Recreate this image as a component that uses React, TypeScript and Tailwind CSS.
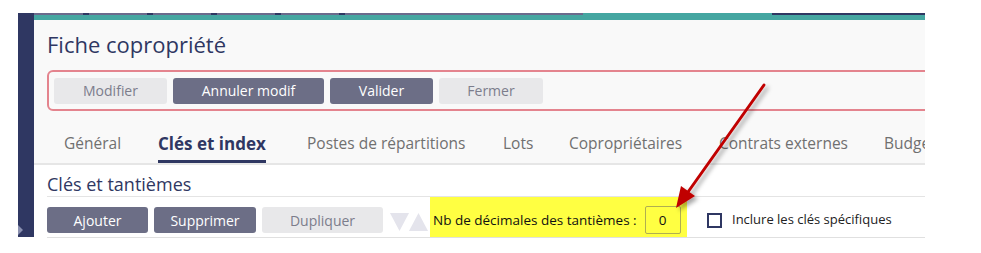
import React from 'react';

const topButtons = [
  { label: 'Modifier', w: 'w-[113px]', active: false },
  { label: 'Annuler modif', w: 'w-[151px]', active: true },
  { label: 'Valider', w: 'w-[103px]', active: true },
  { label: 'Fermer', w: 'w-[104px]', active: false },
];

const tabs = [
  { label: 'Général', w: 'w-[94px]' },
  { label: 'Clés et index', w: 'w-[149px]', active: true },
  { label: 'Postes de répartitions', w: 'w-[196px]' },
  { label: 'Lots', w: 'w-[66px]' },
  { label: 'Copropriétaires', w: 'w-[150px]' },
  { label: 'Contrats externes', w: 'w-[165px]' },
  { label: 'Budget', w: 'w-[80px]' },
];

const Btn: React.FC<{ label: string; w: string; active?: boolean }> = ({ label, w, active }) => (
  <div
    className={`${w} h-[26px] shrink-0 rounded-[3px] flex items-center justify-center text-[14px] ${
      active ? 'bg-[#6c6e86] text-white' : 'bg-[#e8e8ea] text-[#7c7d8c]'
    }`}
  >
    {label}
  </div>
);

export default function App() {
  return (
    <div
      className="relative w-[981px] h-[253px] bg-white overflow-hidden"
      style={{ fontFamily: '"Open Sans", "Noto Sans", sans-serif' }}
    >
      <div className="pt-[13px] flex">
        <div className="w-[18px] shrink-0" />
        {/* Sidebar */}
        <div className="w-[16px] h-[224px] shrink-0 bg-[#2f3762] flex flex-col items-start justify-end pb-[2px]">
          <div className="w-0 h-0 border-y-[5px] border-y-transparent border-l-[5px] border-l-[#8a90b0]" />
        </div>

        {/* Main */}
        <div className="w-[891px] shrink-0 overflow-hidden flex flex-col">
          {/* Top bar */}
          <div className="h-[2px] bg-[#6b6a8c] flex">
            <div className="flex gap-[58px] pl-[49px] w-[549px]">
              {[0, 1, 2, 3, 4].map((i) => (
                <div key={i} className="w-[6px] h-[2px] bg-[#2f3762]" />
              ))}
            </div>
            <div className="w-[189px] h-[2px] bg-[#45a6a1]" />
            <div className="flex-1 h-[2px] bg-[#2f3762]" />
          </div>
          <div className="h-[5px] bg-[#45a6a1]" />

          {/* Header panel */}
          <div className="bg-[#f9f9f9] h-[143px] flex flex-col">
            <div className="pl-[13px] pt-[9px] h-[50px] text-[22px] text-[#2f3762] leading-[30px]">
              Fiche copropriété
            </div>
            <div className="ml-[13px] w-[900px] h-[41px] border-2 border-[#e4848e] rounded-[6px] flex items-center gap-[6px] pl-[5px]">
              {topButtons.map((b) => (
                <Btn key={b.label} {...b} />
              ))}
            </div>
            <div className="flex pl-[13px] mt-[16px] h-[36px]">
              {tabs.map((t) => (
                <div key={t.label} className={`${t.w} shrink-0 flex items-start pl-[17px]`}>
                  <div className="inline-flex flex-col">
                    <span
                      className={`leading-[33px] whitespace-nowrap ${
                        t.active ? 'text-[17px] font-bold text-[#2f3762]' : 'text-[15.5px] text-[#707070]'
                      }`}
                    >
                      {t.label}
                    </span>
                    {t.active && <div className="w-full h-[3px] bg-[#2f3762]" />}
                  </div>
                </div>
              ))}
            </div>
          </div>
          <div className="h-[2px] bg-[#e6e6e6]" />

          {/* Section */}
          <div className="bg-white flex flex-col pl-[13px]">
            <div className="h-[31px] pt-[7px] text-[18px] leading-[24px] text-[#2f3762]">Clés et tantièmes</div>
            <div className="h-[1px] bg-[#e4e4e4]" />
            <div className="h-[40px] flex items-center">
              <div className="flex gap-[6px] items-center mt-[6px]">
                <Btn label="Ajouter" w="w-[101px]" active />
                <Btn label="Supprimer" w="w-[102px]" active />
                <Btn label="Dupliquer" w="w-[121px]" />
              </div>
              <div className="flex items-center ml-[7px] mt-[10px]">
                <svg width="39" height="18" viewBox="0 0 39 18">
                  <polygon points="0,0 19,0 9.5,18" fill="#e4e4ec" />
                  <polygon points="19,18 38,18 28.5,0" fill="#e4e4ec" />
                </svg>
              </div>
              <div className="ml-[1px] w-[257px] h-[40px] bg-[#ffff42] flex items-center pl-[3px] pt-[6px]">
                <span className="text-[13.5px] text-[#111]">Nb de décimales des tantièmes :</span>
                <div className="ml-[8px] w-[36px] h-[28px] border border-[#b0ae50] rounded-[2px] flex items-center justify-center text-[13.5px] text-[#111]">
                  0
                </div>
              </div>
              <div className="ml-[20px] mt-[6px] w-[15px] h-[15px] border-2 border-[#2f3762] bg-white" />
              <span className="ml-[10px] mt-[6px] text-[13px] text-[#222]">Inclure les clés spécifiques</span>
            </div>
            <div className="h-[1px] bg-[#e0e0e0]" />
          </div>
        </div>
      </div>

      {/* Annotation arrow */}
      <svg className="absolute left-0 top-0 pointer-events-none" width="981" height="253">
        <defs>
          <filter id="sh" x="-20%" y="-20%" width="140%" height="140%">
            <feDropShadow dx="3" dy="3" stdDeviation="2" floodColor="#000" floodOpacity="0.35" />
          </filter>
        </defs>
        <g filter="url(#sh)">
          <line x1="764" y1="85" x2="688" y2="192" stroke="#c00000" strokeWidth="3" strokeLinecap="round" />
          <polygon points="676,208 681,186 695,196" fill="#c00000" />
        </g>
      </svg>
    </div>
  );
}
